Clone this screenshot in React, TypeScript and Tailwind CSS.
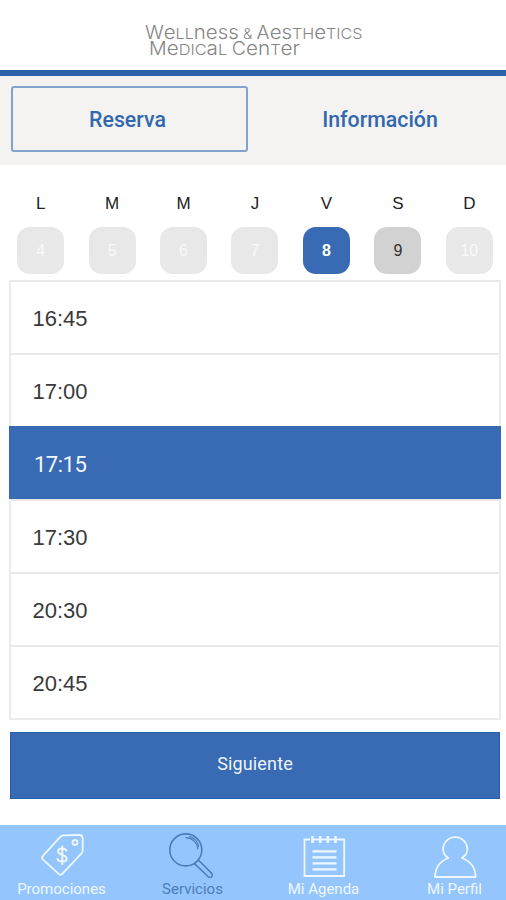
const days = [
  { letter: 'L', num: '4', pill: 'bg-[#e8e8e8] text-[#f8f8f8]' },
  { letter: 'M', num: '5', pill: 'bg-[#e8e8e8] text-[#f8f8f8]' },
  { letter: 'M', num: '6', pill: 'bg-[#e8e8e8] text-[#f8f8f8]' },
  { letter: 'J', num: '7', pill: 'bg-[#e8e8e8] text-[#f8f8f8]' },
  { letter: 'V', num: '8', pill: 'bg-[#386bb3] text-white font-bold' },
  { letter: 'S', num: '9', pill: 'bg-[#d2d2d2] text-[#333]' },
  { letter: 'D', num: '10', pill: 'bg-[#e8e8e8] text-[#f8f8f8]' },
];

const times = ['16:45', '17:00', '17:15', '17:30', '20:30', '20:45'];
const selectedTime = '17:15';

function Logo() {
  return (
    <svg
      width="222"
      height="38"
      viewBox="0 0 222 38"
      fill="#858585"
      fontFamily="Inter, 'Liberation Sans', sans-serif"
      fontWeight="300"
    >
      <text x="1" y="19" fontSize="18" textLength="217.500" lengthAdjust="spacingAndGlyphs">
        W<tspan fontSize="19">e</tspan>
        <tspan fontSize="15">LL</tspan>
        <tspan fontSize="19">ness</tspan>
        <tspan fontSize="14"> &amp; </tspan>A<tspan fontSize="19">es</tspan>
        <tspan fontSize="15">TH</tspan>
        <tspan fontSize="19">e</tspan>
        <tspan fontSize="15">TICS</tspan>
      </text>
      <text x="5" y="34.500" fontSize="18" textLength="151" lengthAdjust="spacingAndGlyphs">
        M<tspan fontSize="19">e</tspan>
        <tspan fontSize="15">DIC</tspan>
        <tspan fontSize="19">a</tspan>
        <tspan fontSize="15">L </tspan>C<tspan fontSize="19">en</tspan>
        <tspan fontSize="15">T</tspan>
        <tspan fontSize="19">er</tspan>
      </text>
    </svg>
  );
}

function TagIcon() {
  return (
    <svg width="48" height="48" viewBox="0 0 48 48" fill="none" stroke="currentColor" strokeWidth="1.8" strokeLinejoin="round" strokeLinecap="round">
      <path d="M25.500 5.300 41 5q3.600 0 3.700 3.500v12q0 1.600-1.200 2.900L24.300 43.800q-1.800 1.800-3.600 0L5 29.600q-1.900-1.800-.1-3.700L22.500 6.700q1.200-1.300 3-1.400Z" />
      <circle cx="37" cy="12.500" r="2.500" />
      <path d="M28.300 20.800c-1-3-8.200-3.200-8.200.8 0 4.400 8.600 2.600 8.600 7 0 4.200-8 3.800-9.200.4M24.300 16.500v17.500" strokeWidth="2" />
    </svg>
  );
}

function SearchIcon() {
  return (
    <svg width="48" height="48" viewBox="0 0 48 48" fill="none" stroke="currentColor" strokeWidth="1.600" strokeLinejoin="round" strokeLinecap="round">
      <circle cx="16.800" cy="19.900" r="16" />
      <path d="M17 7.600c6.500.2 11.300 5.200 11.800 11.300M20.500 6.500c5.100 1.600 8.400 5.300 9.200 10" strokeWidth="1.100" />
      <path d="m25.500 33.600 13.800 13.200q1.700 1.300 3.300-.1t.1-3.300L29.300 30Z" strokeWidth="1.500" />
    </svg>
  );
}

function AgendaIcon() {
  return (
    <svg width="48" height="48" viewBox="0 0 48 48" fill="none" stroke="currentColor" strokeWidth="1.800">
      <path d="M10 9.500H4.500v36.500h39.700V9.500H39" />
      <path d="M12 9.500h28" />
      <path d="M12.500 6v7M20.200 6v7M27.900 6v7M35.500 6v7" strokeWidth="2.600" />
      <path d="M12.500 21.300h24M12.500 27.400h24M12.500 33.400h24M12.500 39.400h24" strokeWidth="2.200" />
    </svg>
  );
}

function ProfileIcon() {
  return (
    <svg width="48" height="48" viewBox="0 0 48 48" fill="none" stroke="currentColor" strokeWidth="1.800" strokeLinejoin="round">
      <path d="M17.300 28C9.500 31 4.200 37.500 4 47h40.600c-.2-9.500-5.500-16-13.700-19 3.800-2.500 5.400-5.200 5.400-8.800a12 12 0 0 0-24.200 0c0 3.600 1.600 6.300 5.200 8.800Z" />
    </svg>
  );
}

const nav = [
  { label: 'Promociones', Icon: TagIcon, color: 'text-[#eef7ff]' },
  { label: 'Servicios', Icon: SearchIcon, color: 'text-[#4d7db8]' },
  { label: 'Mi Agenda', Icon: AgendaIcon, color: 'text-[#eef7ff]' },
  { label: 'Mi Perfil', Icon: ProfileIcon, color: 'text-[#eef7ff]' },
];

export default function App() {
  return (
    <div className="flex h-[900px] w-[506px] flex-col overflow-hidden bg-white font-[Roboto,'Liberation_Sans',sans-serif]">
      <header className="flex h-[76px] shrink-0 justify-center border-b-[6px] border-[#2c62a9] pt-5 pl-1">
        <Logo />
      </header>

      <div className="flex h-[89px] shrink-0 bg-[#f4f3f1] pt-[10px] pl-[11px] text-[21.300px] font-medium text-[#3268ae]">
        <button className="h-[66px] w-[237px] rounded-[3px] border-2 border-[#82a3cf] pt-[2px] pr-[4px]">Reserva</button>
        <button className="ml-[6px] h-[66px] flex-1 pt-[2px]">Información</button>
      </div>

      <div className="grid shrink-0 grid-cols-7 pt-[26px] pr-[1px] pl-[5px] font-['Liberation_Sans',sans-serif]">
        {days.map((d) => (
          <div key={d.num} className="flex flex-col items-center">
            <span className="h-[36px] text-[17px] leading-[25px] text-[#222]">{d.letter}</span>
            <span className={`flex h-[47px] w-[47px] items-center justify-center rounded-[13px] text-[16px] ${d.pill}`}>
              {d.num}
            </span>
          </div>
        ))}
      </div>

      <ul className="mt-[6px] mr-[5px] ml-[9px] shrink-0 border-2 border-t-0 border-[#ebebeb]">
        {times.map((t) =>
          t === selectedTime ? (
            <li key={t} className="-mx-[2px] flex h-[73px] items-center bg-[#386bb3] pt-[3px] pr-[1px] pl-[25px] text-[22px] tracking-[-0.5px] text-[#f2f7ff]">
              {t}
            </li>
          ) : (
            <li key={t} className="flex h-[73px] items-center border-t-2 border-[#e9e9e9] pt-[2px] pl-[21.500px] font-['Liberation_Sans',sans-serif] text-[22px] text-[#3a3a3a]">
              {t}
            </li>
          ),
        )}
      </ul>

      <button className="mt-[12px] mr-[6px] ml-[10px] h-[67px] shrink-0 border border-[#2560ad] bg-[#386bb3] pb-1 text-[18px] tracking-[0.15px] text-[#eef4fc]">
        Siguiente
      </button>

      <nav className="mt-auto -ml-[4px] grid h-[75px] w-[524px] shrink-0 grid-cols-4 bg-[#94c6fd]">
        {nav.map(({ label, Icon, color }) => (
          <div key={label} className={`flex flex-col items-center pt-[5px] ${color}`}>
            <Icon />
            <span className="text-[15px] leading-[23px]">{label}</span>
          </div>
        ))}
      </nav>
    </div>
  );
}
